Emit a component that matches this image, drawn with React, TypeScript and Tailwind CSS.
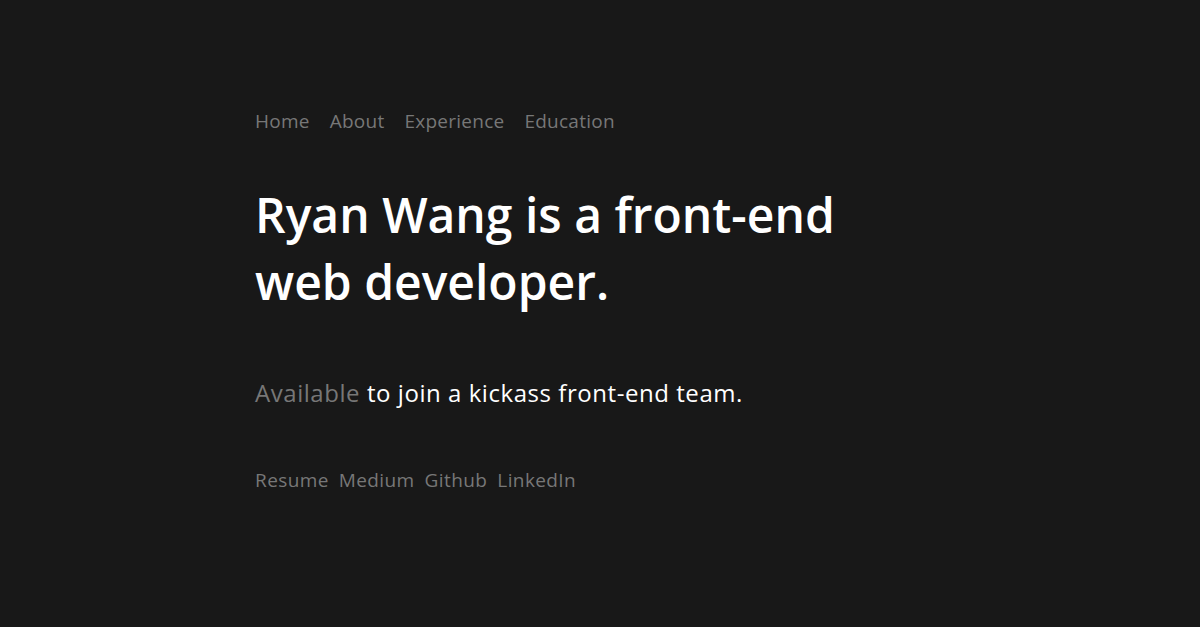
import React from "react";

export default function App() {
  return (
    <div className="min-h-[627px] w-full bg-[#181818]" style={{ fontFamily: '"Open Sans", "Noto Sans", sans-serif' }}>
      <div className="pl-[255px] pt-[107px]">
        <nav className="flex gap-[20px] text-[19px] leading-[28px] tracking-[0.25px] text-[#777]">
          <a>Home</a>
          <a>About</a>
          <a>Experience</a>
          <a>Education</a>
        </nav>
        <h1 className="mt-[46px] w-[640px] text-[48px] font-semibold leading-[67px] text-white">
          Ryan Wang is a front-end web developer.
        </h1>
        <p className="mt-[62px] text-[24px] leading-[32px] tracking-[0.55px] text-white">
          <span className="text-[#777]">Available</span> to join a kickass front-end team.
        </p>
        <div className="mt-[57px] flex gap-[10px] text-[19px] leading-[28px] tracking-[0.4px] text-[#777]">
          <a>Resume</a>
          <a>Medium</a>
          <a>Github</a>
          <a>LinkedIn</a>
        </div>
      </div>
    </div>
  );
}
